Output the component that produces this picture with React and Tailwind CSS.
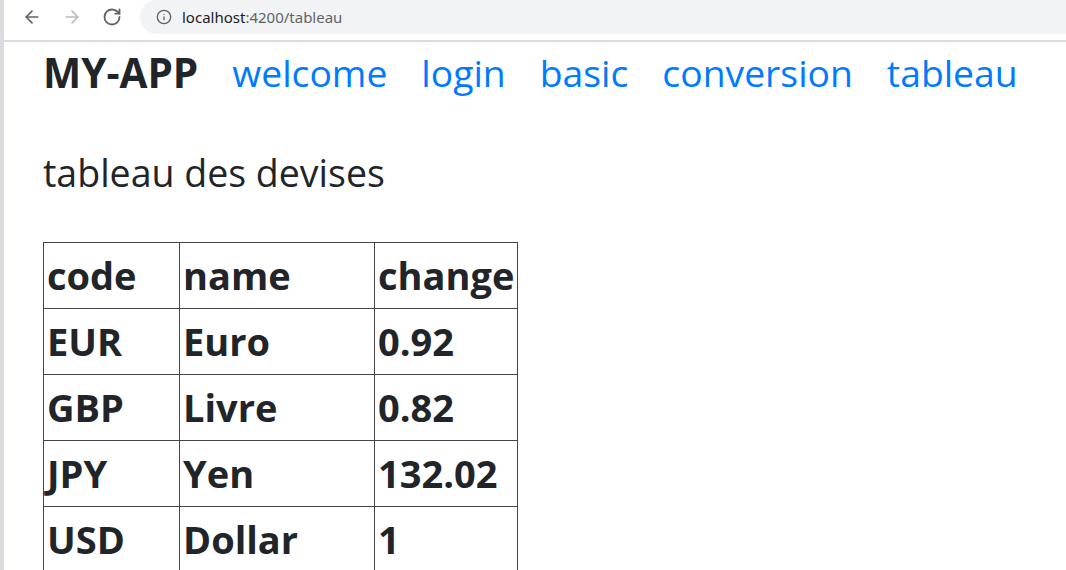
import { ArrowLeft, ArrowRight, RotateCw, Info } from 'lucide-react';

const devises = [
  { code: 'EUR', name: 'Euro', change: '0.92' },
  { code: 'GBP', name: 'Livre', change: '0.82' },
  { code: 'JPY', name: 'Yen', change: '132.02' },
  { code: 'USD', name: 'Dollar', change: '1' },
];

const links = ['welcome', 'login', 'basic', 'conversion', 'tableau'];

function BrowserBar() {
  return (
    <div className="h-[42px] border-b-2 border-[#dadce0] flex items-start">
      <div className="flex items-center h-[34px] pl-[18px] gap-[20px] text-[#5f6368]">
        <ArrowLeft size={20} strokeWidth={2} />
        <ArrowRight size={20} strokeWidth={2} className="text-[#b9bbbe]" />
        <RotateCw size={20} strokeWidth={2.2} />
      </div>
      <div className="ml-[18px] flex-1 h-[34px] bg-[#f1f3f4] rounded-l-full flex items-center pl-[16px] gap-[10px]">
        <Info size={16} strokeWidth={2} className="text-[#5f6368]" />
        <span className="text-[15px] text-[#202124]" style={{ fontFamily: '"Noto Sans", sans-serif' }}>
          localhost<span className="text-[#5f6368]">:4200/tableau</span>
        </span>
      </div>
    </div>
  );
}

export default function App() {
  return (
    <div
      className="h-[570px] overflow-hidden bg-white border-l-4 border-[#dadce0] text-[#212529]"
      style={{ fontFamily: '"Open Sans", sans-serif' }}
    >
      <BrowserBar />
      <div className="pl-[39px]">
        <nav className="flex items-center h-[64px] -mt-[1px] gap-[34px] text-[37.3px]">
          <span className="font-bold text-[40.5px]">MY-APP</span>
          {links.map((l) => (
            <a key={l} href="#" className="text-[#007bff]">{l}</a>
          ))}
        </nav>
        <h2 className="mt-[42px] text-[37.5px] leading-[52px]">tableau des devises</h2>
        <table className="mt-[43px] table-fixed border-collapse border border-[#454545] text-[38px] font-bold leading-[59px]">
          <thead>
            <tr>
              <th className="w-[136px] border border-[#454545] px-[3px] py-[3px] text-left">code</th>
              <th className="w-[195px] border border-[#454545] px-[3px] py-[3px] text-left">name</th>
              <th className="w-[142px] border border-[#454545] px-[3px] py-[3px] text-left">change</th>
            </tr>
          </thead>
          <tbody>
            {devises.map((d) => (
              <tr key={d.code}>
                <td className="border border-[#454545] px-[3px] py-[3px]">{d.code}</td>
                <td className="border border-[#454545] px-[3px] py-[3px]">{d.name}</td>
                <td className="border border-[#454545] px-[3px] py-[3px]">{d.change}</td>
              </tr>
            ))}
          </tbody>
        </table>
      </div>
    </div>
  );
}
